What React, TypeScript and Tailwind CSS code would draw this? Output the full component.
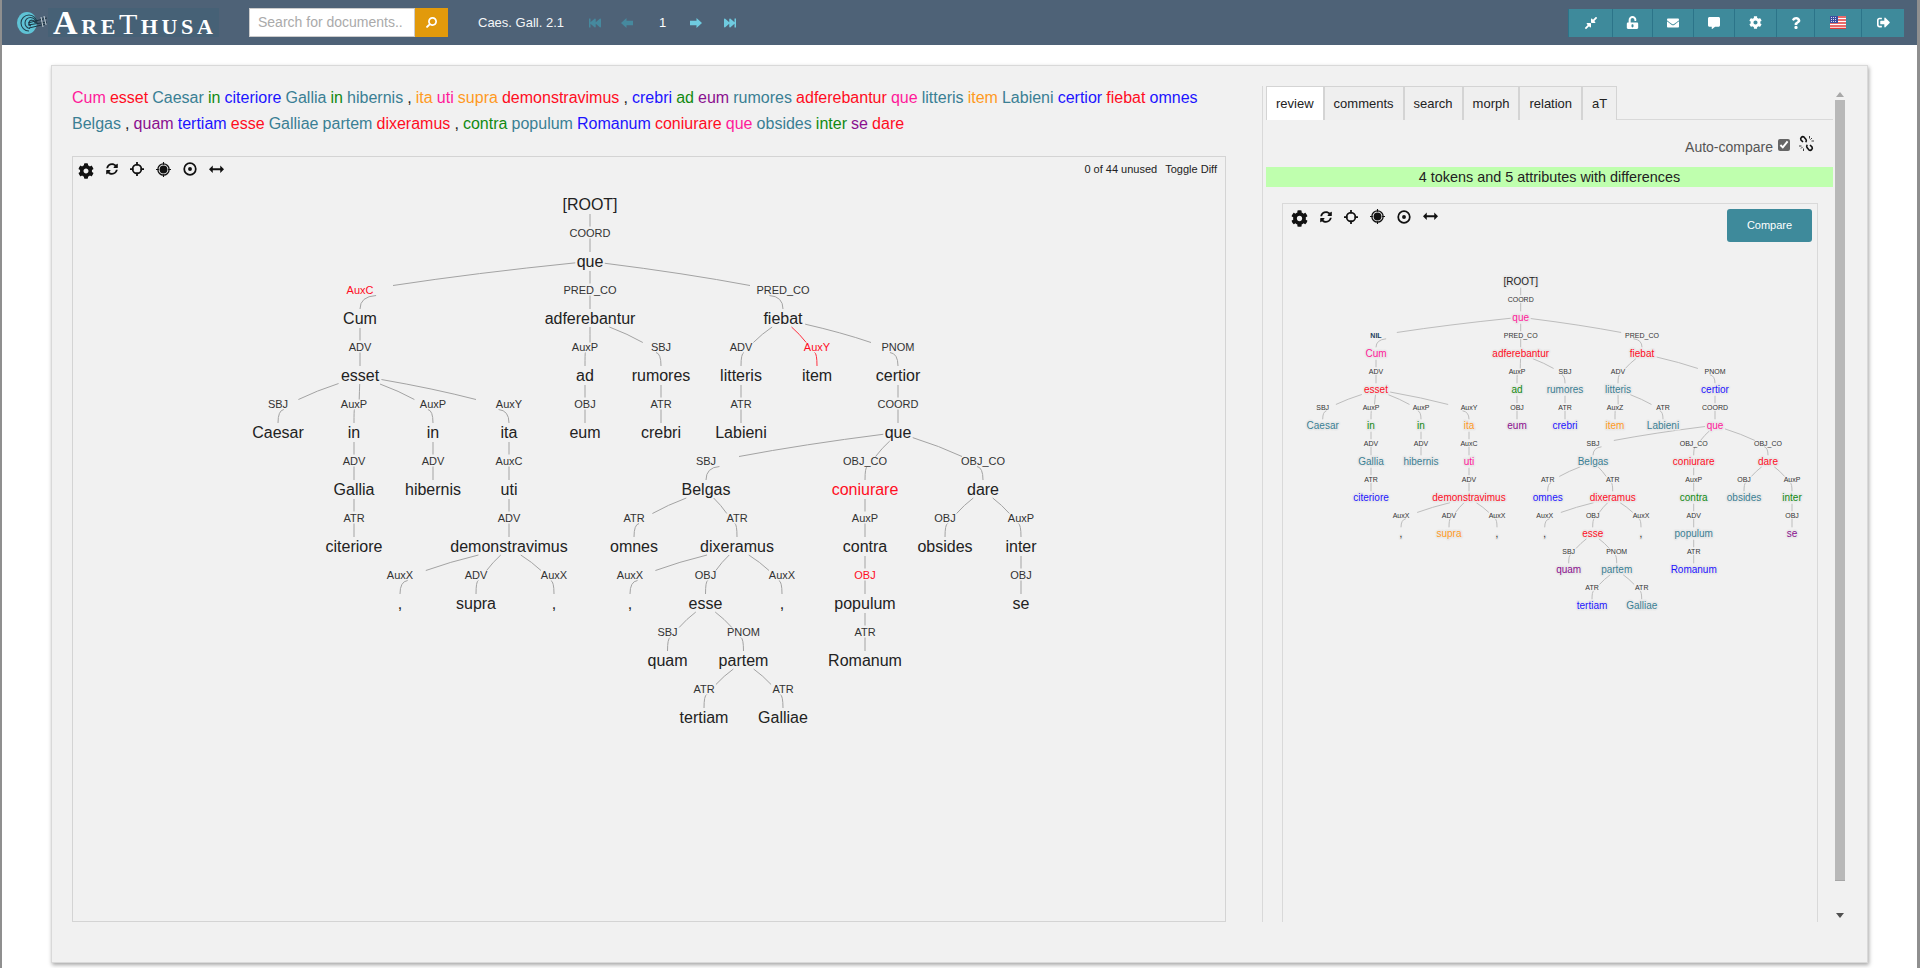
import {
  FaCog,
  FaCommentAlt,
  FaCompressAlt,
  FaEnvelope,
  FaFastBackward,
  FaFastForward,
  FaQuestion,
  FaSearch,
  FaSignOutAlt,
  FaSyncAlt,
  FaUnlockAlt,
} from 'react-icons/fa';

const colors: Record<string, string> = {
  pink: '#ff1a9a',
  red: '#ff0d1f',
  teal: '#3a7f94',
  green: '#118a11',
  blue: '#1c14ff',
  orange: '#ff9a1f',
  purple: '#8a0f8f',
  black: '#222222',
};

const textColors: Record<string, string> = {
  pink: 'text-[#ff1a9a]',
  red: 'text-[#ff0d1f]',
  teal: 'text-[#3a7f94]',
  green: 'text-[#118a11]',
  blue: 'text-[#1c14ff]',
  orange: 'text-[#ff9a1f]',
  purple: 'text-[#8a0f8f]',
  black: 'text-[#222222]',
};

const sentence: [string, string][] = [
  ['Cum', 'pink'], ['esset', 'red'], ['Caesar', 'teal'], ['in', 'green'], ['citeriore', 'blue'], ['Gallia', 'teal'],
  ['in', 'green'], ['hibernis', 'teal'], [',', 'black'], ['ita', 'orange'], ['uti', 'pink'], ['supra', 'orange'],
  ['demonstravimus', 'red'], [',', 'black'], ['crebri', 'blue'], ['ad', 'green'], ['eum', 'purple'], ['rumores', 'teal'],
  ['adferebantur', 'red'], ['que', 'pink'], ['litteris', 'teal'], ['item', 'orange'], ['Labieni', 'teal'], ['certior', 'blue'],
  ['fiebat', 'red'], ['omnes', 'blue'], ['Belgas', 'teal'], [',', 'black'], ['quam', 'purple'], ['tertiam', 'blue'],
  ['esse', 'red'], ['Galliae', 'teal'], ['partem', 'teal'], ['dixeramus', 'red'], [',', 'black'], ['contra', 'green'],
  ['populum', 'teal'], ['Romanum', 'blue'], ['coniurare', 'red'], ['que', 'pink'], ['obsides', 'teal'], ['inter', 'green'],
  ['se', 'purple'], ['dare', 'red'],
];

type TreeNode = {
  id: string;
  word: string;
  parent?: string;
  rel?: string;
  x: number;
  k: number;
  color?: string;
  flag?: 'rel' | 'edge' | 'nil';
};

const n = (
  id: string,
  word: string,
  parent: string | undefined,
  rel: string | undefined,
  x: number,
  k: number,
  color?: string,
  flag?: 'rel' | 'edge' | 'nil',
): TreeNode => ({ id, word, parent, rel, x, k, color, flag });

// left tree, the one being edited
const mainTree: TreeNode[] = [
  n('root', '[ROOT]', undefined, undefined, 590, 0),
  n('que', 'que', 'root', 'COORD', 590, 1),
  n('cum', 'Cum', 'que', 'AuxC', 360, 2, undefined, 'rel'),
  n('esset', 'esset', 'cum', 'ADV', 360, 3),
  n('caesar', 'Caesar', 'esset', 'SBJ', 278, 4),
  n('in1', 'in', 'esset', 'AuxP', 354, 4),
  n('in2', 'in', 'esset', 'AuxP', 433, 4),
  n('ita', 'ita', 'esset', 'AuxY', 509, 4),
  n('gallia', 'Gallia', 'in1', 'ADV', 354, 5),
  n('hibernis', 'hibernis', 'in2', 'ADV', 433, 5),
  n('uti', 'uti', 'ita', 'AuxC', 509, 5),
  n('citeriore', 'citeriore', 'gallia', 'ATR', 354, 6),
  n('demon', 'demonstravimus', 'uti', 'ADV', 509, 6),
  n('c1', ',', 'demon', 'AuxX', 400, 7),
  n('supra', 'supra', 'demon', 'ADV', 476, 7),
  n('c2', ',', 'demon', 'AuxX', 554, 7),
  n('adfer', 'adferebantur', 'que', 'PRED_CO', 590, 2),
  n('ad', 'ad', 'adfer', 'AuxP', 585, 3),
  n('eum', 'eum', 'ad', 'OBJ', 585, 4),
  n('rumores', 'rumores', 'adfer', 'SBJ', 661, 3),
  n('crebri', 'crebri', 'rumores', 'ATR', 661, 4),
  n('fiebat', 'fiebat', 'que', 'PRED_CO', 783, 2),
  n('litteris', 'litteris', 'fiebat', 'ADV', 741, 3),
  n('labieni', 'Labieni', 'litteris', 'ATR', 741, 4),
  n('item', 'item', 'fiebat', 'AuxY', 817, 3, undefined, 'edge'),
  n('certior', 'certior', 'fiebat', 'PNOM', 898, 3),
  n('que2', 'que', 'certior', 'COORD', 898, 4),
  n('belgas', 'Belgas', 'que2', 'SBJ', 706, 5),
  n('omnes', 'omnes', 'belgas', 'ATR', 634, 6),
  n('dixeramus', 'dixeramus', 'belgas', 'ATR', 737, 6),
  n('c3', ',', 'dixeramus', 'AuxX', 630, 7),
  n('esse', 'esse', 'dixeramus', 'OBJ', 705.5, 7),
  n('c4', ',', 'dixeramus', 'AuxX', 782, 7),
  n('quam', 'quam', 'esse', 'SBJ', 667.5, 8),
  n('partem', 'partem', 'esse', 'PNOM', 743.5, 8),
  n('tertiam', 'tertiam', 'partem', 'ATR', 704, 9),
  n('galliae', 'Galliae', 'partem', 'ATR', 783, 9),
  n('coniurare', 'coniurare', 'que2', 'OBJ_CO', 865, 5, 'red'),
  n('contra', 'contra', 'coniurare', 'AuxP', 865, 6),
  n('populum', 'populum', 'contra', 'OBJ', 865, 7, undefined, 'rel'),
  n('romanum', 'Romanum', 'populum', 'ATR', 865, 8),
  n('dare', 'dare', 'que2', 'OBJ_CO', 983, 5),
  n('obsides', 'obsides', 'dare', 'OBJ', 945, 6),
  n('inter', 'inter', 'dare', 'AuxP', 1021, 6),
  n('se', 'se', 'inter', 'OBJ', 1021, 7),
];

// right tree, the gold standard shown in the review tab
const reviewTree: TreeNode[] = [
  n('root', '[ROOT]', undefined, undefined, 1520.7, 0),
  n('que', 'que', 'root', 'COORD', 1520.7, 1, 'pink'),
  n('cum', 'Cum', 'que', 'NIL', 1376, 2, 'pink', 'nil'),
  n('esset', 'esset', 'cum', 'ADV', 1376, 3, 'red'),
  n('caesar', 'Caesar', 'esset', 'SBJ', 1322.7, 4, 'teal'),
  n('in1', 'in', 'esset', 'AuxP', 1371, 4, 'green'),
  n('in2', 'in', 'esset', 'AuxP', 1421, 4, 'green'),
  n('ita', 'ita', 'esset', 'AuxY', 1469, 4, 'orange'),
  n('gallia', 'Gallia', 'in1', 'ADV', 1371, 5, 'teal'),
  n('hibernis', 'hibernis', 'in2', 'ADV', 1421, 5, 'teal'),
  n('uti', 'uti', 'ita', 'AuxC', 1469, 5, 'pink'),
  n('citeriore', 'citeriore', 'gallia', 'ATR', 1371, 6, 'blue'),
  n('demon', 'demonstravimus', 'uti', 'ADV', 1469, 6, 'red'),
  n('c1', ',', 'demon', 'AuxX', 1401, 7, 'black'),
  n('supra', 'supra', 'demon', 'ADV', 1449, 7, 'orange'),
  n('c2', ',', 'demon', 'AuxX', 1497, 7, 'black'),
  n('adfer', 'adferebantur', 'que', 'PRED_CO', 1520.7, 2, 'red'),
  n('ad', 'ad', 'adfer', 'AuxP', 1517, 3, 'green'),
  n('eum', 'eum', 'ad', 'OBJ', 1517, 4, 'purple'),
  n('rumores', 'rumores', 'adfer', 'SBJ', 1565, 3, 'teal'),
  n('crebri', 'crebri', 'rumores', 'ATR', 1565, 4, 'blue'),
  n('fiebat', 'fiebat', 'que', 'PRED_CO', 1642, 2, 'red'),
  n('litteris', 'litteris', 'fiebat', 'ADV', 1618, 3, 'teal'),
  n('item', 'item', 'litteris', 'AuxZ', 1615, 4, 'orange'),
  n('labieni', 'Labieni', 'litteris', 'ATR', 1663, 4, 'teal'),
  n('certior', 'certior', 'fiebat', 'PNOM', 1715, 3, 'blue'),
  n('que2', 'que', 'certior', 'COORD', 1715, 4, 'pink'),
  n('belgas', 'Belgas', 'que2', 'SBJ', 1593, 5, 'teal'),
  n('omnes', 'omnes', 'belgas', 'ATR', 1547.7, 6, 'blue'),
  n('dixeramus', 'dixeramus', 'belgas', 'ATR', 1612.7, 6, 'red'),
  n('c3', ',', 'dixeramus', 'AuxX', 1544.7, 7, 'black'),
  n('esse', 'esse', 'dixeramus', 'OBJ', 1592.7, 7, 'red'),
  n('c4', ',', 'dixeramus', 'AuxX', 1641, 7, 'black'),
  n('quam', 'quam', 'esse', 'SBJ', 1568.7, 8, 'purple'),
  n('partem', 'partem', 'esse', 'PNOM', 1616.7, 8, 'teal'),
  n('tertiam', 'tertiam', 'partem', 'ATR', 1592, 9, 'blue'),
  n('galliae', 'Galliae', 'partem', 'ATR', 1641.7, 9, 'teal'),
  n('coniurare', 'coniurare', 'que2', 'OBJ_CO', 1693.7, 5, 'red'),
  n('contra', 'contra', 'coniurare', 'AuxP', 1693.7, 6, 'green'),
  n('populum', 'populum', 'contra', 'ADV', 1693.7, 7, 'teal'),
  n('romanum', 'Romanum', 'populum', 'ATR', 1693.7, 8, 'blue'),
  n('dare', 'dare', 'que2', 'OBJ_CO', 1768, 5, 'red'),
  n('obsides', 'obsides', 'dare', 'OBJ', 1744, 6, 'teal'),
  n('inter', 'inter', 'dare', 'AuxP', 1792, 6, 'green'),
  n('se', 'se', 'inter', 'OBJ', 1792, 7, 'purple'),
];

// rough Liberation Sans advance widths, only needed to start edges at the word's edge
function wordWidth(word: string, size: number) {
  let w = 0;
  for (const c of word) {
    if ('iljtf,r'.includes(c)) w += 0.31;
    else if ('mw'.includes(c)) w += 0.8;
    else if (c >= 'A' && c <= 'Z') w += 0.68;
    else w += 0.53;
  }
  return w * size;
}

type TreeProps = {
  nodes: TreeNode[];
  viewBox: string;
  width: number;
  height: number;
  y0: number;
  gap: number;
  wordSize: number;
  relSize: number;
  halo?: boolean;
  stroke: string;
};

function DependencyTree({ nodes, viewBox, width, height, y0, gap, wordSize, relSize, halo, stroke }: TreeProps) {
  const s = gap / 57;
  const hh = 9 * s;
  const wordY = (k: number) => y0 + gap * k;
  const relY = (k: number) => y0 + gap * (k - 1) + gap / 2;

  return (
    <svg width={width} height={height} viewBox={viewBox} className="block" fontFamily="'Liberation Sans', sans-serif">
      {nodes.map((node) => {
        const parent = nodes.find((p) => p.id === node.parent);
        if (!parent) return null;
        const px = parent.x;
        const py = wordY(parent.k);
        const lx = node.x;
        const ly = relY(node.k);
        const cy = wordY(node.k);
        const dx = lx - px;
        const edgeColor = node.flag === 'edge' ? '#ff3040' : stroke;

        if (Math.abs(dx) < 3) {
          return (
            <path
              key={node.id}
              d={`M${px} ${py + hh + 1}L${lx} ${ly - 6 * s}M${lx} ${ly + 6 * s}L${lx} ${cy - hh}`}
              stroke={edgeColor}
              fill="none"
            />
          );
        }

        const sign = Math.sign(dx);
        const entry = Math.min(33 * s, 4 * s + 0.2 * Math.abs(dx));
        const ex = lx - sign * entry;
        const ey = ly - 4 * s;
        const hw = wordWidth(parent.word, wordSize) / 2 + 2;
        const t = Math.min(hw / Math.abs(ex - px), hh / Math.abs(ey - py));
        const sx = px + t * (ex - px);
        const sy = py + t * (ey - py);
        const qx = sx + (ex - sx) * 0.55;
        const qy = sy + (ey - sy) * 0.45;
        const bx = lx - sign * 0.07 * Math.abs(dx);
        const by = ly + 6 * s;

        return (
          <path
            key={node.id}
            d={`M${sx} ${sy}Q${qx} ${qy} ${ex} ${ey}M${bx} ${by}Q${lx} ${by + 1} ${lx} ${cy - hh}`}
            stroke={edgeColor}
            fill="none"
          />
        );
      })}

      {nodes.map((node) => (
        <text
          key={node.id}
          x={node.x}
          y={wordY(node.k)}
          textAnchor="middle"
          dominantBaseline="central"
          fontSize={wordSize}
          fill={node.color ? colors[node.color] : '#222222'}
          stroke={halo ? '#e9e9e9' : undefined}
          strokeWidth={halo ? 3 : undefined}
          strokeLinejoin="round"
          paintOrder="stroke"
        >
          {node.word}
        </text>
      ))}

      {nodes.map((node) =>
        node.rel ? (
          <text
            key={node.id}
            x={node.x}
            y={relY(node.k)}
            textAnchor="middle"
            dominantBaseline="central"
            fontSize={relSize}
            fontWeight={node.flag === 'nil' ? 700 : 400}
            fill={node.flag === 'rel' || node.flag === 'edge' ? '#ff0d1f' : node.flag === 'nil' ? '#24405c' : '#333333'}
          >
            {node.rel}
          </text>
        ) : null,
      )}
    </svg>
  );
}

function CrossIcon({ size }: { size: number }) {
  return (
    <svg width={size} height={size} viewBox="0 0 16 16" fill="none" stroke="#111">
      <circle cx="8" cy="8" r="5" strokeWidth="2" />
      <path d="M8 0v4M8 12v4M0 8h4M12 8h4" strokeWidth="2" />
    </svg>
  );
}

function ScopeIcon({ size }: { size: number }) {
  return (
    <svg width={size} height={size} viewBox="0 0 16 16" fill="#111" stroke="#111">
      <circle cx="8" cy="8" r="6" fill="none" strokeWidth="1.4" />
      <circle cx="8" cy="8" r="4.2" stroke="none" />
      <path d="M8 0v3M8 13v3M0 8h3M13 8h3" strokeWidth="1.2" />
    </svg>
  );
}

function TargetIcon({ size }: { size: number }) {
  return (
    <svg width={size} height={size} viewBox="0 0 16 16" fill="#111">
      <circle cx="8" cy="8" r="6.6" fill="none" stroke="#111" strokeWidth="2" />
      <circle cx="8" cy="8" r="2.2" />
    </svg>
  );
}

function StretchIcon({ size }: { size: number }) {
  return (
    <svg width={size} height={size * 0.7} viewBox="0 0 16 11" fill="#111">
      <path d="M0 5.5L4 1.5v3h8v-3l4 4-4 4v-3H4v3z" />
    </svg>
  );
}

function TreeTools({ gap, large = false }: { gap: string; large?: boolean }) {
  return (
    <div className={`flex items-center text-[#111] ${gap}`}>
      <FaCog size={large ? 17 : 16} className="mt-[4px]" />
      <FaSyncAlt size={12} />
      <CrossIcon size={14} />
      <ScopeIcon size={15} />
      <TargetIcon size={14} />
      <StretchIcon size={15} />
    </div>
  );
}

function BrokenLink() {
  return (
    <svg width="17" height="17" viewBox="0 0 17 17" fill="none" stroke="#111">
      <path d="M5 7L3 5a2.2 2.2 0 0 1 3-3l2 2.4a2.2 2.2 0 0 1-.4 2.8" strokeWidth="1.6" />
      <path d="M12 10l2 2a2.2 2.2 0 0 1-3 3l-2-2.4a2.2 2.2 0 0 1 .4-2.8" strokeWidth="1.6" />
      <path d="M11.5 1v2.5M14 3l-1.6 1.6M16 6h-2.5M1 11h2.5M3 13.5l1.6-1.6M5.5 16v-2.5" strokeWidth="0.8" />
    </svg>
  );
}

function BlockArrow({ flip = false, className }: { flip?: boolean; className: string }) {
  return (
    <svg width="12" height="10" viewBox="0 0 12 10" fill="currentColor" className={`${flip ? '-scale-x-100' : ''} ${className}`}>
      <path d="M0 2.8h6.5V0L12 5l-5.5 5V7.2H0z" />
    </svg>
  );
}

function UsFlag() {
  return (
    <svg width="16" height="13" viewBox="0 0 16 13">
      <rect width="16" height="13" fill="#fff" />
      <path d="M0 1h16M0 4h16M0 7h16M0 10h16M0 12.5h16" stroke="#e23b3b" strokeWidth="1.4" />
      <rect width="8" height="7" fill="#3c4fa0" />
      <path d="M1 1.5h6M1 3.5h6M1 5.5h6" stroke="#fff" strokeWidth="0.8" strokeDasharray="1 1" />
    </svg>
  );
}

function ArethusaMark() {
  return (
    <svg width="32" height="26" viewBox="0 0 32 26" fill="none">
      <ellipse cx="11" cy="13" rx="10" ry="11" fill="#5fc3d6" />
      <path d="M21 13a8 8 0 1 0-8 8M20 13a5.5 5.5 0 1 0-6 5.5M19 13a3 3 0 1 0-4 3" stroke="#23404f" strokeWidth="1.1" />
      <path d="M12 13l19-5M12 15l19-3M13 18l17-4" stroke="#1c3442" strokeWidth="1" />
      <path d="M25 7l2 10M28 6l2 9" stroke="#dfe8ec" strokeWidth="0.8" />
    </svg>
  );
}

const headerButtons = [
  { key: 'compress', w: 'w-[44px]', icon: <FaCompressAlt size={14} /> },
  { key: 'lock', w: 'w-[40px]', icon: <FaUnlockAlt size={13} /> },
  { key: 'mail', w: 'w-[41px]', icon: <FaEnvelope size={12} /> },
  { key: 'chat', w: 'w-[41px]', icon: <FaCommentAlt size={12} /> },
  { key: 'gear', w: 'w-[42px]', icon: <FaCog size={13} /> },
  { key: 'help', w: 'w-[38px]', icon: <FaQuestion size={12} /> },
  { key: 'flag', w: 'w-[47px]', icon: <UsFlag /> },
  { key: 'out', w: 'w-[43px]', icon: <FaSignOutAlt size={13} /> },
];

const tabs = ['review', 'comments', 'search', 'morph', 'relation', 'aT'];

export default function App() {
  return (
    <div className="h-[968px] w-full overflow-hidden bg-white border-l-2 border-r-[3px] border-[#8f8f8f] font-['Liberation_Sans',sans-serif] text-[#222]">
      <header className="flex h-[45px] items-center justify-between bg-[#4e6277] pr-[13px]">
        <div className="flex items-center">
          <div className="ml-[14px] flex items-center">
            <ArethusaMark />
            <div className="flex h-[29px] w-[171px] items-baseline bg-[#466176] pl-[5px] font-['Liberation_Serif',serif] leading-[29px] tracking-[3.6px] text-white">
              <span className="text-[34px] font-bold leading-[29px]">A</span>
              <span className="text-[22px] font-bold">RE</span>
              <span className="text-[30px] leading-[29px]">T</span>
              <span className="text-[22px] font-bold">HUSA</span>
            </div>
          </div>

          <div className="ml-[30px] flex h-[29px] items-stretch">
            <input
              className="w-[166px] border border-[#cccccc] bg-white px-[8px] text-[14px] placeholder:text-[#aaaaaa] outline-none"
              placeholder="Search for documents.."
              readOnly
            />
            <button className="flex w-[33px] items-center justify-center bg-[#e29a0b] text-white">
              <FaSearch size={11} className="-scale-x-100" />
            </button>
          </div>

          <span className="ml-[30px] w-[87px] text-[13px] text-[#f4f6f7]">Caes. Gall. 2.1</span>
          <div className="ml-[24px] flex items-center text-[13px] text-white">
            <FaFastBackward size={12} className="text-[#46899e]" />
            <BlockArrow flip className="ml-[20px] text-[#46899e]" />
            <span className="ml-[26px] w-[7px]">1</span>
            <BlockArrow className="ml-[24px] text-[#6fcbe0]" />
            <FaFastForward size={12} className="ml-[22px] text-[#6fcbe0]" />
          </div>
        </div>

        <div className="flex h-[28px]">
          {headerButtons.map((b) => (
            <button
              key={b.key}
              className={`flex items-center justify-center border-l border-[#2c7489] bg-[#3e8a9b] text-white ${b.w}`}
            >
              {b.icon}
            </button>
          ))}
        </div>
      </header>

      <main className="ml-[49px] mt-[20px] flex h-[898px] w-[1817px] border border-[#d9d9d9] bg-[#f1f1f1] shadow-[1px_2px_4px_rgba(0,0,0,0.35)]">
        <section className="ml-[20px] w-[1154px] shrink-0 pt-[19px]">
          <p className="h-[52px] text-[16px] leading-[25.6px] [word-spacing:-0.35px]">
            {sentence.map(([word, color], i) => (
              <span key={i} className={textColors[color]}>
                {word}{' '}
              </span>
            ))}
          </p>
          <div className="mt-[19px] h-[766px] border border-[#d4d4d4]">
            <div className="flex h-[30px] items-start justify-between pl-[5px] pr-[8px]">
              <div className="pt-[2px]">
                <TreeTools gap="gap-[12px]" />
              </div>
              <div className="flex gap-[8px] pt-[4px] text-[11px] text-[#222]">
                <span>0 of 44 unused</span>
                <span>Toggle Diff</span>
              </div>
            </div>
            <DependencyTree
              nodes={mainTree}
              viewBox="73 187 1152 734"
              width={1152}
              height={734}
              y0={204}
              gap={57}
              wordSize={16}
              relSize={11}
              stroke="#a3a3a3"
            />
          </div>
        </section>

        <section className="ml-[36px] mt-[20px] flex h-[836px] w-[583px] shrink-0 border-l border-[#d9d9d9] pl-[3px]">
          <div className="w-[567px] shrink-0">
            <div className="flex h-[34px] border-b border-[#d9d9d9]">
              {tabs.map((tab, i) => (
                <div
                  key={tab}
                  className={`-mb-px flex items-center border border-b-0 border-[#d4d4d4] px-[9px] text-[13px] ${
                    i === 0 ? 'bg-white' : 'bg-[#efefef]'
                  }`}
                >
                  {tab}
                </div>
              ))}
            </div>

            <div className="flex h-[47px] items-start justify-end pr-[18px] pt-[15px] text-[14px] text-[#555]">
              <span className="mt-[2px]">Auto-compare</span>
              <input type="checkbox" checked readOnly className="ml-[5px] mt-[4px] h-[12px] w-[12px] accent-[#666]" />
              <div className="ml-[8px]">
                <BrokenLink />
              </div>
            </div>

            <div className="h-[20px] bg-[#bfffae] text-center text-[14.4px] leading-[20px]">
              4 tokens and 5 attributes with differences
            </div>

            <div className="ml-[16px] mt-[16px] h-[719px] w-[536px] border-x border-t border-[#d9d9d9]">
              <div className="flex h-[46px] items-start justify-between pl-[8px] pr-[5px] pt-[5px]">
                <div className="-mt-[3px]">
                  <TreeTools gap="gap-[12px]" large />
                </div>
                <button className="h-[33px] w-[85px] rounded-[3px] bg-[#3e8a9b] text-[11px] text-white">Compare</button>
              </div>
              <DependencyTree
                nodes={reviewTree}
                viewBox="1283 250 534 672"
                width={534}
                height={672}
                y0={281}
                gap={36}
                wordSize={10}
                relSize={7}
                halo
                stroke="#bdbdbd"
              />
            </div>
          </div>

          <div className="ml-[2px] flex w-[10px] shrink-0 flex-col items-center pt-[6px]">
            <svg width="8" height="5" viewBox="0 0 8 5" fill="#a8a8a8">
              <path d="M4 0l4 5H0z" />
            </svg>
            <div className="mt-[3px] h-[781px] w-[10px] border-b border-[#a6a6a6] bg-[#b8b8b8]" />
            <svg width="8" height="5" viewBox="0 0 8 5" fill="#505050" className="mt-[32px]">
              <path d="M0 0h8L4 5z" />
            </svg>
          </div>
        </section>
      </main>
    </div>
  );
}
